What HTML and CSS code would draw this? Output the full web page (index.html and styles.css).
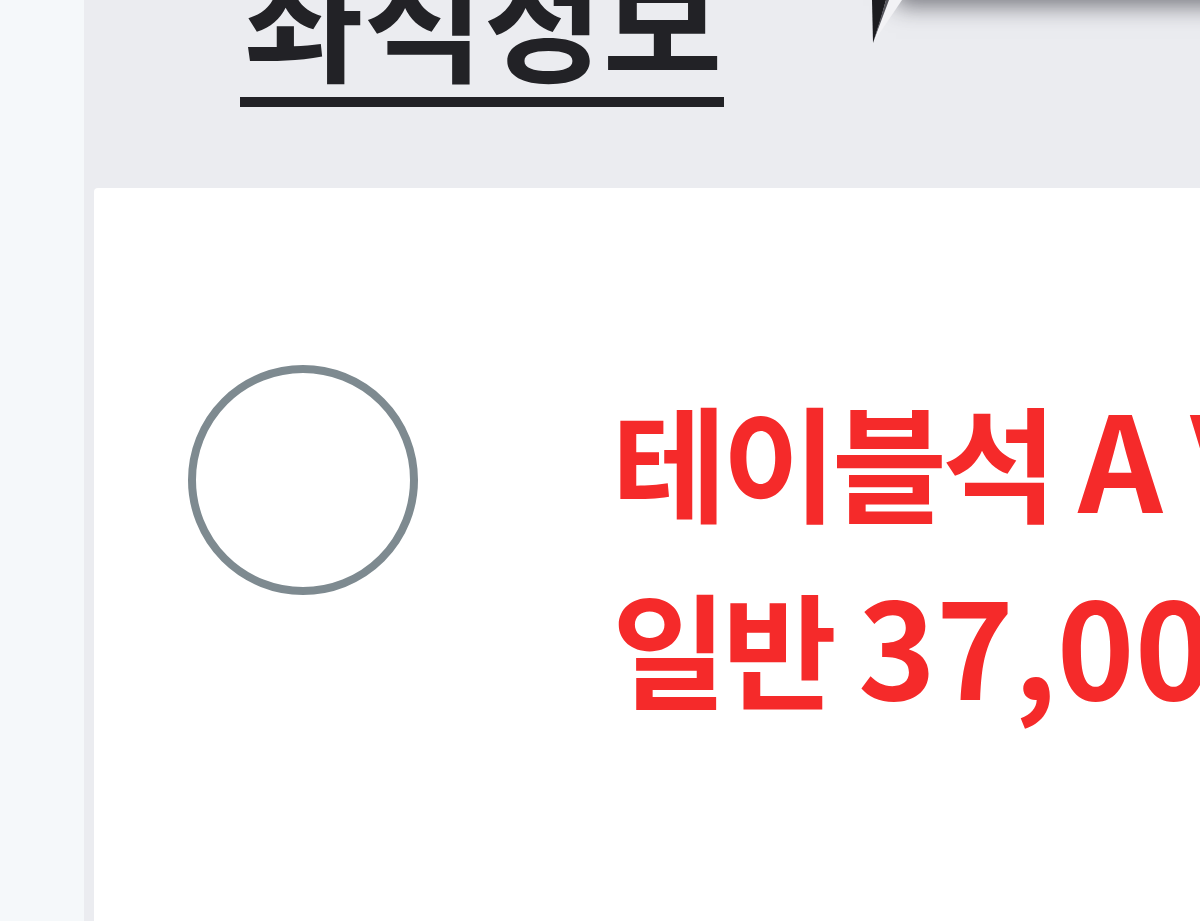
FILE: index.html
```html
<!DOCTYPE html>
<html lang="ko">
<head>
    <meta charset="UTF-8">
    <meta name="viewport" content="width=device-width, initial-scale=1.0">
    <title>좌석정보</title>
    <link rel="stylesheet" href="styles.css">
</head>
<body>
    <div class="page">
        <div class="side"></div>
        <div class="main">
            <div class="seat-header">
                <h2 class="seat-title">좌석정보</h2>
                <div class="tip">
                    <div class="tip-body"></div>
                    <svg class="tip-tail" width="34" height="44" viewBox="0 0 34 44">
                        <path d="M0 0 L15 0 L1 43 Z" fill="#1c1c20"/>
                        <path d="M14 0 L30 0 L3 40 Z" fill="#f2f2f5"/>
                        <path d="M14 0 L17 0 L2 40 Z" fill="#55555c"/>
                    </svg>
                </div>
            </div>
            <div class="seat-card">
                <label class="seat-option">
                    <span class="radio"></span>
                    <span class="seat-info">
                        <span class="seat-name">테이블석 <span class="latin">A VIP</span>석</span>
                        <span class="seat-price">일반 <span class="latin">37,000</span>원</span>
                    </span>
                </label>
            </div>
        </div>
    </div>
</body>
</html>
```

FILE: styles.css
```css
html, body {
    margin: 0;
    height: 100%;
    overflow: hidden;
}

body {
    background-color: #f5f8fa;
    font-family: "Noto Sans CJK KR", "Noto Sans", sans-serif;
}

.page {
    display: flex;
    height: 921px;
}

.side {
    width: 84px;
    flex-shrink: 0;
    background-color: #f5f8fa;
}

.main {
    flex: 1;
    background-color: #ebecf0;
    padding-left: 10px;
    display: flex;
    flex-direction: column;
    position: relative;
    overflow: hidden;
}

.seat-header {
    height: 188px;
    flex-shrink: 0;
}

.seat-title {
    display: inline-block;
    margin: -58px 0 0 146px;
    padding: 0 2px 9px 4px;
    font-size: 130px;
    font-weight: 700;
    line-height: 146px;
    color: #222226;
    border-bottom: 10px solid #222226;
}

.tip {
    position: absolute;
    top: 0;
    left: 788px;
}

.tip-tail {
    display: block;
    position: relative;
}

.tip-body {
    position: absolute;
    left: 24px;
    top: -80px;
    width: 420px;
    height: 80px;
    background-color: #ffffff;
    box-shadow: 0 6px 22px rgba(40, 40, 50, 0.6);
}

.seat-card {
    flex: 1;
    background-color: #ffffff;
    border-top-left-radius: 4px;
    overflow: hidden;
}

.seat-option {
    display: flex;
    align-items: flex-start;
    padding: 177px 0 0 94px;
    white-space: nowrap;
}

.radio {
    width: 214px;
    height: 214px;
    border: 8px solid #7e8a90;
    border-radius: 50%;
    flex-shrink: 0;
}

.seat-info {
    display: flex;
    flex-direction: column;
    margin-left: 194px;
    color: #f52a2a;
    font-size: 125px;
    font-weight: 700;
    line-height: 187px;
    letter-spacing: -5px;
    word-spacing: -4px;
}

.latin {
    font-size: 132px;
    line-height: 1;
    letter-spacing: 0;
    word-spacing: -9px;
}
```
